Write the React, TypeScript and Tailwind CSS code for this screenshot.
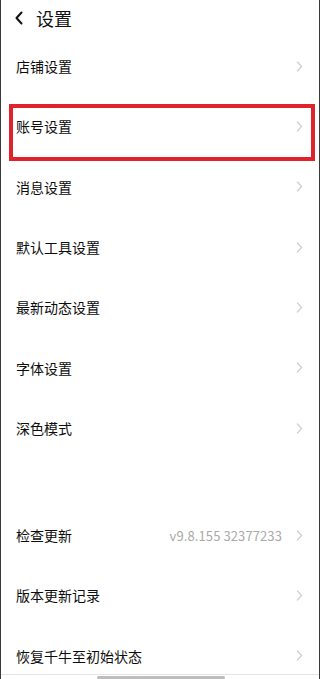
import { type ReactNode } from "react";

const FONT = '"Noto Sans CJK SC", "Noto Sans", sans-serif';

type Row = { label: string; value?: string };

const GROUP_A: Row[] = [
  { label: "店铺设置" },
  { label: "账号设置" },
  { label: "消息设置" },
  { label: "默认工具设置" },
  { label: "最新动态设置" },
  { label: "字体设置" },
  { label: "深色模式" },
];

const GROUP_B: Row[] = [
  { label: "检查更新", value: "v9.8.155 32377233" },
  { label: "版本更新记录" },
  { label: "恢复千牛至初始状态" },
];

function Chevron() {
  return (
    <svg width="7" height="11" viewBox="0 0 7 11" fill="none" className="shrink-0">
      <path d="M1.5 1 L5.5 5.5 L1.5 10" stroke="#d2d2d2" strokeWidth="1.4" strokeLinecap="round" strokeLinejoin="round" />
    </svg>
  );
}

function SettingRow({ row, children }: { row: Row; children?: ReactNode }) {
  return (
    <div className="relative flex h-[60.33px] shrink-0 items-center pl-[15px] pr-[16px]">
      <span className="flex-1 text-[14px] leading-none text-[#0d0d0d]">{row.label}</span>
      {row.value && (
        <span className="mr-[14px] text-[13px] leading-none tracking-[0.1px] text-[#a9a9a9]">{row.value}</span>
      )}
      <Chevron />
      {children}
    </div>
  );
}

export default function App() {
  return (
    <div
      className="relative flex h-[679px] w-[320px] flex-col overflow-hidden border-x border-[#3a3a3a] bg-white"
      style={{ fontFamily: FONT }}
    >
      {/* Header */}
      <div className="flex h-[36px] shrink-0 items-center pl-[13px]">
        <svg width="10" height="14" viewBox="0 0 10 14" fill="none">
          <path d="M7.5 1.5 L2.5 7 L7.5 12.5" stroke="#111" strokeWidth="2" strokeLinecap="round" strokeLinejoin="round" />
        </svg>
        <span className="ml-[12px] text-[18px] leading-none text-[#111]">设置</span>
      </div>

      {GROUP_A.map((row) => (
        <SettingRow key={row.label} row={row}>
          {row.label === "账号设置" && (
            <span className="pointer-events-none absolute top-[8px] bottom-[-4px] left-[8px] right-[4px] z-10 border-[4px] border-[#e0222b]" />
          )}
        </SettingRow>
      ))}

      <div className="h-[46.7px] shrink-0" />

      {GROUP_B.map((row) => (
        <SettingRow key={row.label} row={row} />
      ))}

      {/* Bottom edge + home indicator */}
      <div className="absolute inset-x-0 bottom-[4px] h-px bg-[#e4e4e4]" />
      <div className="absolute bottom-0 left-[96px] h-[3px] w-[128px] rounded-full bg-[#bdbdbd]" />
    </div>
  );
}
